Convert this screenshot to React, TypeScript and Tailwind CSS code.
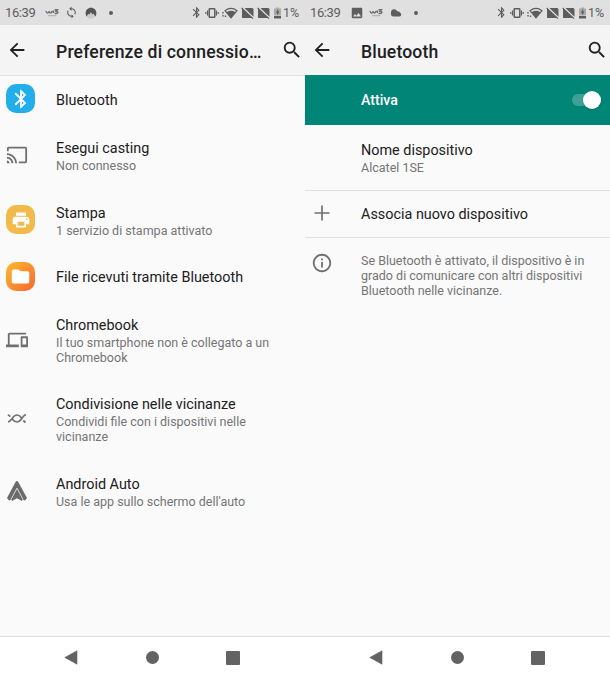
import type { ReactNode } from "react";

const BT =
  "M17.71 7.71L12 2h-1v7.59L6.41 5 5 6.41 10.59 12 5 17.59 6.41 19 11 14.41V22h1l5.71-5.71-4.3-4.29 4.3-4.29zM13 5.83l1.88 1.88L13 9.59V5.83zm1.88 10.46L13 18.17v-3.76l1.88 1.88z";
const CAST =
  "M21 3H3c-1.1 0-2 .9-2 2v3h2V5h18v14h-7v2h7c1.1 0 2-.9 2-2V5c0-1.1-.9-2-2-2zM1 18v3h3c0-1.66-1.34-3-3-3zm0-4v2c2.76 0 5 2.24 5 5h2c0-3.87-3.13-7-7-7zm0-4v2c4.97 0 9 4.03 9 9h2c0-6.08-4.93-11-11-11z";
const PRINT =
  "M19 8H5c-1.66 0-3 1.34-3 3v6h4v4h12v-4h4v-6c0-1.66-1.34-3-3-3zm-3 11H8v-5h8v5zm3-7c-.55 0-1-.45-1-1s.45-1 1-1 1 .45 1 1-.45 1-1 1zm-1-9H6v4h12V3z";
const FOLDER =
  "M10 4H4c-1.1 0-2 .9-2 2v12c0 1.1.9 2 2 2h16c1.1 0 2-.9 2-2V8c0-1.1-.9-2-2-2h-8l-2-2z";
const DEVICES =
  "M4 6h18V4H4c-1.1 0-2 .9-2 2v11H0v3h14v-3H4V6zm19 2h-6c-.55 0-1 .45-1 1v10c0 .55.45 1 1 1h6c.55 0 1-.45 1-1V9c0-.55-.45-1-1-1zm-1 9h-4v-7h4v7z";
const INFO =
  "M11 7h2v2h-2zm0 4h2v6h-2zm1-9C6.48 2 2 6.48 2 12s4.480 10 10 10 10-4.480 10-10S17.520 2 12 2zm0 18c-4.410 0-8-3.590-8-8s3.590-8 8-8 8 3.590 8 8-3.590 8-8 8z";
const SYNC =
  "M12 4V1L8 5l4 4V6c3.31 0 6 2.69 6 6 0 1.01-.25 1.97-.7 2.8l1.46 1.46C19.54 15.03 20 13.57 20 12c0-4.42-3.58-8-8-8zm0 14c-3.31 0-6-2.69-6-6 0-1.01.25-1.97.7-2.8L5.24 7.74C4.46 8.97 4 10.43 4 12c0 4.42 3.58 8 8 8v3l4-4-4-4v3z";
const IMAGE =
  "M21 19V5c0-1.1-.9-2-2-2H5c-1.1 0-2 .9-2 2v14c0 1.1.9 2 2 2h14c1.1 0 2-.9 2-2zM8.5 13.5l2.5 3.01L14.5 12l4.5 6H5l3.5-4.5z";
const BACK = "M20 11H7.83l5.59-5.59L12 4l-8 8 8 8 1.41-1.41L7.83 13H20v-2z";
const SEARCH =
  "M15.5 14h-.79l-.28-.27A6.471 6.471 0 0 0 16 9.5 6.5 6.5 0 1 0 9.5 16c1.61 0 3.09-.59 4.23-1.57l.27.28v.79l5 4.99L20.49 19l-4.99-5zm-6 0C7.01 14 5 11.99 5 9.5S7.01 5 9.5 5 14 7.01 14 9.5 11.99 14 9.5 14z";

function Glyph({ d, className }: { d: string; className: string }) {
  return (
    <svg viewBox="0 0 24 24" fill="currentColor" className={`shrink-0 ${className}`}>
      <path d={d} />
    </svg>
  );
}

function Wi3() {
  return (
    <svg viewBox="0 0 14 10" className="h-[10px] w-[14px] shrink-0" fill="none" stroke="#707070">
      <path d="M1 2.8q.4 2.4 1.8 2.2Q4 4.7 4.1 3q.2 2 1.6 2Q7 4.8 7 2.8M8.3 2.6v2.3" strokeWidth="1.3" />
      <path d="M9.500 1.700h3L11 3.300c3 .1 2.300 2.700-1.500 2" strokeWidth="1.4" />
      <path d="M3 7.700h8.500" strokeWidth="1" stroke="#aaa" />
    </svg>
  );
}

function SimOff() {
  return (
    <svg viewBox="0 0 13 12" className="h-[12px] w-[13px] shrink-0" fill="#5d5d5d">
      <path d="M4 1h7.500l1 1v7.700L3.600 1.300z" />
      <path d="M.3 1.500l1-.9L12.500 11l-1 .9-.9-.9H1V2.200z" />
      <path d="M1.800.7L13 11.200" stroke="#e0e0e0" strokeWidth="1" />
    </svg>
  );
}

function StatusBar({ children }: { children: ReactNode }) {
  return (
    <div className="flex h-[25px] shrink-0 items-center bg-[#e0e0e0] pl-[5px] text-[#5d5d5d]">
      <span className="w-[40px] text-[13px] leading-[25px] tracking-[-0.4px]">16:39</span>
      <div className="flex w-[148px] items-center">{children}</div>
      <Glyph d={BT} className="-ml-[3px] size-[13px]" />
      <svg viewBox="0 0 14 12" className="ml-[2px] h-[12px] w-[14px] shrink-0" fill="none" stroke="currentColor">
        <rect x="4.200" y="1.700" width="5.600" height="8.600" rx=".6" strokeWidth="1.5" />
        <path d="M2.500 3.500v5M11.500 3.500v5" strokeWidth="1.2" />
        <path d="M.8 5v2M13.200 5v2" strokeWidth="1.1" />
      </svg>
      <svg viewBox="0 0 16 12" className="ml-[3px] h-[12px] w-[16px] shrink-0" fill="none" stroke="currentColor">
        <path d="M3 3.700Q9 -.8 15 3.700L9 10.800z" strokeWidth="1.2" />
        <path d="M4.500 5.300Q9 2.400 13.500 5.300L9 11z" fill="currentColor" stroke="none" />
        <path d="M1 5v1.500M1 8v1.500M3.500 8.500V10" strokeWidth="1.4" />
      </svg>
      <div className="ml-[3px] flex gap-[3px]">
        <SimOff />
        <SimOff />
      </div>
      <svg viewBox="0 0 9 12" className="ml-[3px] h-[12px] w-[9px] shrink-0">
        <path d="M3 .5h3v1H8v7H1v-7h2z" fill="#aaa" />
        <path d="M1 9h7v2.500H1z" fill="#5d5d5d" />
        <path d="M5.200 2L2.700 5.800h1.500V8.500L6.500 4.800H5.200z" fill="#5d5d5d" />
      </svg>
      <span className="ml-px text-[12.5px] leading-[25px]">1%</span>
    </div>
  );
}

function AppBar({ title }: { title: string }) {
  return (
    <div className="flex h-[50px] shrink-0 items-center bg-[#f4f4f4] pl-[6px] text-[#202020]">
      <Glyph d={BACK} className="size-[22px]" />
      <h1 className="ml-[28px] w-[225px] whitespace-nowrap pt-[4px] text-[17.6px] leading-[22px] font-medium tracking-[0.15px]">
        {title}
      </h1>
      <Glyph d={SEARCH} className="size-[22px]" />
    </div>
  );
}

function NavBar() {
  return (
    <div className="mt-auto flex h-[43px] shrink-0 items-center justify-between border-t border-[#e0e0e0] bg-white pb-[1px] pl-[64px] pr-[65px] text-[#636363]">
      <svg viewBox="0 0 14 15" className="h-[15px] w-[14px]" fill="currentColor">
        <path d="M13 .8v13.400L.8 7.500z" stroke="currentColor" strokeWidth=".6" strokeLinejoin="round" />
      </svg>
      <div className="size-[13px] rounded-full bg-current" />
      <div className="size-[14px] rounded-[1px] bg-current" />
    </div>
  );
}

type RowProps = { h: string; icon: ReactNode; title: string; sub?: string[]; textPad?: string };

function Row({ h, icon, title, sub, textPad = "" }: RowProps) {
  return (
    <div className={`flex shrink-0 items-center ${h}`}>
      <div className="flex w-[56px] shrink-0 pb-[2px] pl-[6px] text-[#707070]">{icon}</div>
      <div className={textPad}>
        <p className="whitespace-nowrap text-[14.4px] leading-[21px] text-[#202020]">{title}</p>
        {sub && (
          <p className="-mt-px whitespace-nowrap text-[12.5px] leading-[15px] text-[#757575]">
            {sub.map((line) => (
              <span key={line} className="block">
                {line}
              </span>
            ))}
          </p>
        )}
      </div>
    </div>
  );
}

function Badge({ className, children }: { className: string; children: ReactNode }) {
  return <div className={`flex size-[29px] items-center justify-center rounded-[10px] ${className}`}>{children}</div>;
}

function ConnectionPanel() {
  return (
    <section className="flex w-[305px] flex-col bg-[#fafafa]">
      <StatusBar>
        <Wi3 />
        <Glyph d={SYNC} className="ml-[6px] size-[13px]" />
        <svg viewBox="0 0 12 12" className="ml-[7px] size-[12px]">
          <circle cx="6" cy="6" r="5.500" fill="#cacaca" />
          <path d="M1.500 9.500C-.8 5 2 .8 6 .8s6.800 4.200 4.500 8.700L8.300 6.500l-.9.900L6 5.300 4.300 7.600l-.8-.8z" fill="#555" />
        </svg>
        <span className="ml-[12px] size-[4px] rounded-full bg-current" />
      </StatusBar>
      <AppBar title="Preferenze di connessio…" />
      <div className="h-px shrink-0 bg-[#e2e2e2]" />
      <Row
        h="h-[47px]"
        textPad="pt-[2px]"
        title="Bluetooth"
        icon={
          <Badge className="bg-[#22aeea] text-white">
            <Glyph d={BT} className="size-[22px]" />
          </Badge>
        }
      />
      <Row
        h="h-[65px]"
        title="Esegui casting"
        sub={["Non connesso"]}
        textPad="pb-px"
        icon={<Glyph d={CAST} className="size-[22px]" />}
      />
      <Row
        h="h-[65px]"
        title="Stampa"
        sub={["1 servizio di stampa attivato"]}
        textPad="pb-px"
        icon={
          <Badge className="bg-[#f2b94b] text-white">
            <Glyph d={PRINT} className="size-[20px]" />
          </Badge>
        }
      />
      <Row
        h="h-[48px]"
        title="File ricevuti tramite Bluetooth"
        icon={
          <Badge className="bg-linear-to-br from-[#fcb92e] to-[#f5652e] text-white">
            <Glyph d={FOLDER} className="size-[21px]" />
          </Badge>
        }
      />
      <Row
        h="h-[79px]"
        title="Chromebook"
        sub={["Il tuo smartphone non è collegato a un", "Chromebook"]}
        textPad="pb-px"
        icon={<Glyph d={DEVICES} className="size-[22px]" />}
      />
      <Row
        h="h-[79px]"
        title="Condivisione nelle vicinanze"
        sub={["Condividi file con i dispositivi nelle", "vicinanze"]}
        textPad="pb-px"
        icon={
          <svg viewBox="0 0 22 12" className="h-[13px] w-[22px]" fill="none" stroke="currentColor" strokeWidth="1.7">
            <path d="M2 9.500C5.500 9.500 6.500 2.500 11 2.500q2.500 0 4.300 2.800M17.300 8l2.200 2M2 2.200l2.300 2M6.300 6.800Q8.500 9.500 11 9.500c4.500 0 5.500-7 9-7.300" />
          </svg>
        }
      />
      <Row
        h="h-[65px]"
        title="Android Auto"
        sub={["Usa le app sullo schermo dell'auto"]}
        icon={
          <svg viewBox="0 0 22 22" className="size-[22px]">
            <path
              d="M9.400 2.200Q11 0 12.400 2.200L21 18l-2 2.400-3.200-.9L11 17.300l-4.800 2.200-3.200.9L1 18z"
              fill="#6a6a6a"
            />
            <path d="M5 18.500L11 8l6 10.500-1 2.500-5-2.700L6 21z" fill="#6a6a6a" />
            <path d="M4.800 19.800L11 8.200l6.200 11.600" fill="none" stroke="#e6e6e6" strokeWidth=".9" />
          </svg>
        }
      />
      <NavBar />
    </section>
  );
}

function BluetoothPanel() {
  return (
    <section className="flex w-[305px] flex-col bg-[#fafafa]">
      <StatusBar>
        <Glyph d={IMAGE} className="size-[14px]" />
        <div className="ml-[5px]">
          <Wi3 />
        </div>
        <svg viewBox="0 0 12 10" className="ml-[7px] h-[10px] w-[12px]" fill="currentColor">
          <path d="M3.500 8.500A2.500 2.500 0 0 1 1 6C.5 3 2 1.300 4 1.300c1.600 0 2.500.7 3 1.900 2-.3 2.900.7 3 1.600C11.500 5 11.800 8.500 9.500 8.500z" />
        </svg>
        <span className="ml-[12px] size-[4px] rounded-full bg-current" />
      </StatusBar>
      <AppBar title="Bluetooth" />
      <div className="flex h-[50px] shrink-0 items-center justify-between bg-[#008577] pl-[56px] pr-[9px]">
        <span className="pt-px text-[14.2px] font-medium text-white">Attiva</span>
        <div className="flex h-[12px] w-[29px] items-center justify-end rounded-full bg-[#3fa195]">
          <div className="size-[18px] shrink-0 rounded-full bg-white shadow-sm" />
        </div>
      </div>
      <Row h="h-[65px]" title="Nome dispositivo" sub={["Alcatel 1SE"]} icon={null} />
      <div className="h-px shrink-0 bg-[#e0e0e0]" />
      <Row
        h="h-[46px]"
        title="Associa nuovo dispositivo"
        textPad="pt-px"
        icon={
          <svg viewBox="0 0 22 22" className="size-[22px]" stroke="currentColor" strokeWidth="1.7">
            <path d="M11 3.500v15M3.500 11h15" />
          </svg>
        }
      />
      <div className="h-px shrink-0 bg-[#e0e0e0]" />
      <div className="flex pt-[14px]">
        <div className="w-[56px] shrink-0 pl-[6px] text-[#707070]">
          <Glyph d={INFO} className="size-[22px]" />
        </div>
        <p className="whitespace-nowrap pt-px text-[12.5px] leading-[15px] text-[#757575]">
          Se Bluetooth è attivato, il dispositivo è in
          <br />
          grado di comunicare con altri dispositivi
          <br />
          Bluetooth nelle vicinanze.
        </p>
      </div>
      <NavBar />
    </section>
  );
}

export default function App() {
  return (
    <main className="flex h-[679px] w-[610px] overflow-hidden font-[Roboto,sans-serif]">
      <ConnectionPanel />
      <BluetoothPanel />
    </main>
  );
}
